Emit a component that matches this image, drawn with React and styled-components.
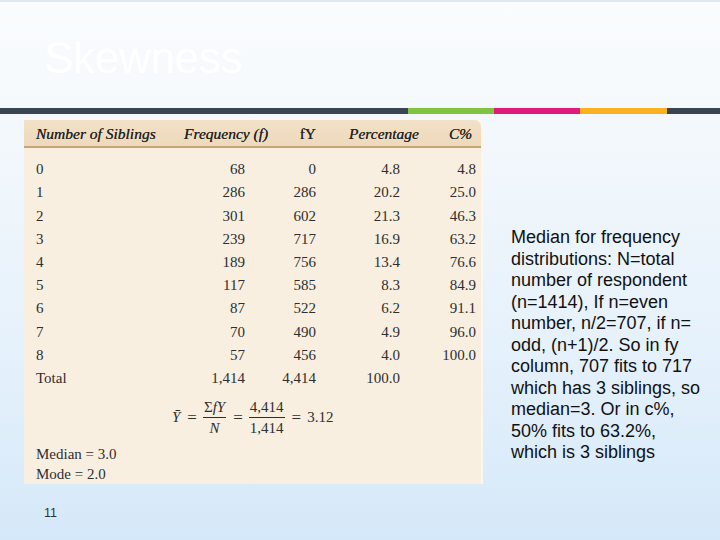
import React from 'react';
import styled, {createGlobalStyle} from 'styled-components';

const GlobalStyle = createGlobalStyle`
    html, body {
        margin: 0;
        padding: 0;
    }
    body {
        font-family: "Liberation Sans", Arial, sans-serif;
    }
`;

const Slide = styled.div`
    width: 720px;
    height: 540px;
    overflow: hidden;
    display: flex;
    flex-direction: column;
    border-top: 2px solid #dde9f3;
    box-sizing: border-box;
    background: linear-gradient(180deg, #fafcfe 0%, #f3f8fc 25%, #e3f0fb 70%, #d5e8f9 100%);
`;

const TitleArea = styled.div`
    height: 106px;
    box-sizing: border-box;
    padding: 34px 0 0 44px;
`;

const Title = styled.h1`
    margin: 0;
    font-family: "Liberation Sans", Arial, sans-serif;
    font-weight: normal;
    font-size: 44px;
    line-height: 44px;
    color: #ffffff;
    letter-spacing: -0.3px;
`;

const Bar = styled.div`
    display: flex;
    height: 6px;
`;

const Segment = styled.div`
    width: ${({$w}) => $w}px;
    flex: ${({$grow}) => ($grow ? 1 : 'none')};
    background: ${({$color}) => $color};
`;

const Content = styled.div`
    display: flex;
    padding: 6px 0 0 24px;
`;

const LeftColumn = styled.div`
    display: flex;
    flex-direction: column;
`;

const Card = styled.div`
    width: 459px;
    height: 364px;
    background: #f8efe1;
    border-top-right-radius: 7px;
    border-right: 2px solid #fbf6ee;
    box-sizing: border-box;
    font-family: "Liberation Serif", "Times New Roman", serif;
    color: #2e2e2e;
    display: flex;
    flex-direction: column;
`;

const HeadRow = styled.div`
    display: grid;
    grid-template-columns: ${({$cols}) => $cols};
    height: 26px;
    padding-top: 2px;
    align-items: center;
    background: linear-gradient(180deg, #f2e1c8 0%, #eed9bb 100%);
    border-bottom: 2px solid #c7a675;
    border-top-right-radius: 7px;
`;

const HeadCell = styled.div`
    font-style: ${({$upright}) => ($upright ? 'normal' : 'italic')};
    font-size: 15.5px;
    color: #262626;
    text-align: ${({$align}) => $align};
    padding: ${({$pad}) => $pad};
    white-space: nowrap;
    text-shadow: 0 0 0.3px #262626;
`;

const Body = styled.div`
    padding-top: 10px;
`;

const Row = styled.div`
    display: grid;
    grid-template-columns: ${({$cols}) => $cols};
    height: 23.2px;
    align-items: center;
`;

const Cell = styled.div`
    font-size: 15px;
    text-align: ${({$align}) => $align};
    padding: ${({$pad}) => $pad};
    white-space: nowrap;
`;

const Formula = styled.div`
    display: flex;
    align-items: center;
    gap: 4px;
    padding: 8px 0 0 148px;
    font-size: 15px;
    height: 40px;
`;

const Var = styled.span`
    font-style: italic;
`;

const Equals = styled.span`
    font-size: 17px;
    padding: 0 2px 0 3px;
`;

const Fraction = styled.span`
    display: inline-flex;
    flex-direction: column;
    align-items: center;
    line-height: 18px;
`;

const Numer = styled.span`
    padding: 0 1px 1px;
    border-bottom: 1.5px solid #2e2e2e;
`;

const Denom = styled.span`
    padding-top: 1px;
`;

const Notes = styled.div`
    padding: 7px 0 0 12px;
    font-size: 15px;
    line-height: 20px;
`;

const PageNumber = styled.div`
    margin: 22px 0 0 20px;
    font-size: 12.5px;
    line-height: 15px;
    color: #333;
`;

const Explanation = styled.p`
    margin: 0 0 0 28px;
    padding-top: 107px;
    font-family: "Liberation Sans", Arial, sans-serif;
    font-size: 18px;
    line-height: 21.5px;
    color: #111;
    white-space: nowrap;
`;

const columns = [
    {label: 'Number of Siblings', w: 156, hAlign: 'left', hPad: '0 0 0 12px', dAlign: 'left', dPad: '0 0 0 12px'},
    {label: 'Frequency (f)', w: 88, hAlign: 'left', hPad: '0 0 0 4px', dAlign: 'right', dPad: '0 23px 0 0'},
    {label: 'fY', w: 52, hAlign: 'right', hPad: '0 4px 0 0', dAlign: 'right', dPad: '0 4px 0 0', upright: true},
    {label: 'Percentage', w: 105, hAlign: 'left', hPad: '0 0 0 29px', dAlign: 'right', dPad: '0 25px 0 0'},
    {label: 'C%', w: 58, hAlign: 'left', hPad: '0 0 0 24px', dAlign: 'right', dPad: '0 7px 0 0'},
];

const gridCols = columns.map(c => `${c.w}px`).join(' ');

const rows = [
    ['0', '68', '0', '4.8', '4.8'],
    ['1', '286', '286', '20.2', '25.0'],
    ['2', '301', '602', '21.3', '46.3'],
    ['3', '239', '717', '16.9', '63.2'],
    ['4', '189', '756', '13.4', '76.6'],
    ['5', '117', '585', '8.3', '84.9'],
    ['6', '87', '522', '6.2', '91.1'],
    ['7', '70', '490', '4.9', '96.0'],
    ['8', '57', '456', '4.0', '100.0'],
    ['Total', '1,414', '4,414', '100.0', ''],
];

const segments = [
    {w: 408, color: '#3b4453'},
    {w: 86, color: '#80c341'},
    {w: 86, color: '#df1c7a'},
    {w: 87, color: '#fbb120'},
    {grow: true, color: '#3b4453'},
];

export default function App() {
    return (
        <>
            <GlobalStyle/>
            <Slide>
                <TitleArea>
                    <Title>Skewness</Title>
                </TitleArea>
                <Bar>
                    {segments.map((s, i) => (
                        <Segment key={i} $w={s.w} $grow={s.grow} $color={s.color}/>
                    ))}
                </Bar>
                <Content>
                    <LeftColumn>
                        <Card>
                            <HeadRow $cols={gridCols}>
                                {columns.map(c => (
                                    <HeadCell key={c.label} $align={c.hAlign} $pad={c.hPad} $upright={c.upright}>
                                        {c.label}
                                    </HeadCell>
                                ))}
                            </HeadRow>
                            <Body>
                                {rows.map(r => (
                                    <Row key={r[0]} $cols={gridCols}>
                                        {r.map((v, i) => (
                                            <Cell key={i} $align={columns[i].dAlign} $pad={columns[i].dPad}>{v}</Cell>
                                        ))}
                                    </Row>
                                ))}
                            </Body>
                            <Formula>
                                <Var>Y&#772;</Var>
                                <Equals>=</Equals>
                                <Fraction>
                                    <Numer>&Sigma;<Var>fY</Var></Numer>
                                    <Denom><Var>N</Var></Denom>
                                </Fraction>
                                <Equals>=</Equals>
                                <Fraction>
                                    <Numer>4,414</Numer>
                                    <Denom>1,414</Denom>
                                </Fraction>
                                <Equals>=</Equals>
                                <span>3.12</span>
                            </Formula>
                            <Notes>
                                Median = 3.0<br/>
                                Mode = 2.0
                            </Notes>
                        </Card>
                        <PageNumber>11</PageNumber>
                    </LeftColumn>
                    <Explanation>
                        Median for frequency<br/>
                        distributions: N=total<br/>
                        number of respondent<br/>
                        (n=1414), If n=even<br/>
                        number, n/2=707, if n=<br/>
                        odd, (n+1)/2. So in fy<br/>
                        column, 707 fits to 717<br/>
                        which has 3 siblings, so<br/>
                        median=3. Or in c%,<br/>
                        50% fits to 63.2%,<br/>
                        which is 3 siblings
                    </Explanation>
                </Content>
            </Slide>
        </>
    );
}
